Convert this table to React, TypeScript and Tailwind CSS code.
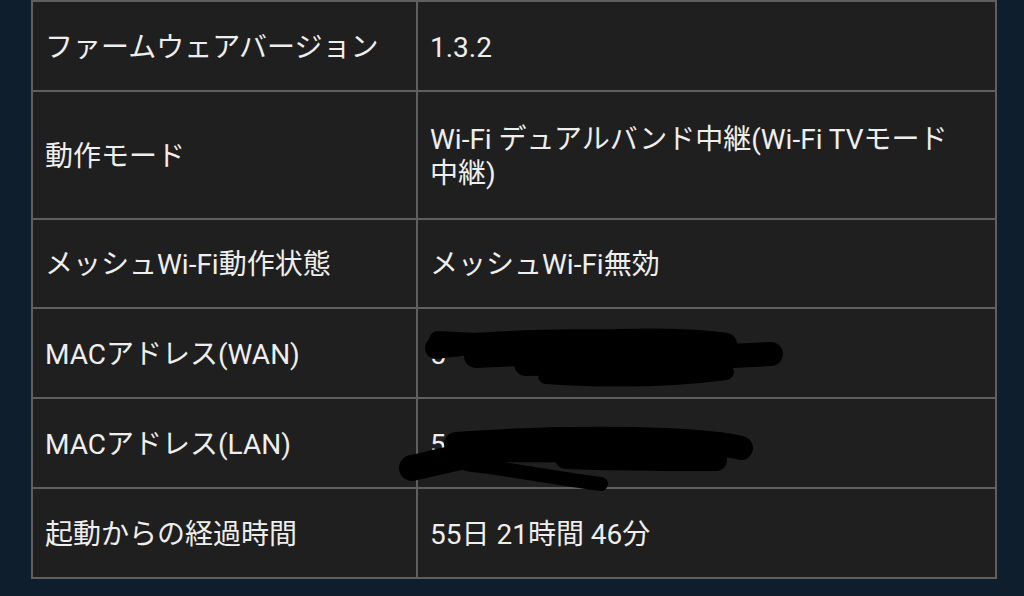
import React from "react";

type Row = { label: string; value: React.ReactNode; h: string };

const Scribble = ({ variant }: { variant: "wan" | "lan" }) => (
  <svg
    className="pointer-events-none absolute left-0 top-0 overflow-visible"
    width="400"
    height="90"
    viewBox="0 0 400 90"
    fill="none"
    stroke="#000"
    strokeLinecap="round"
  >
    {variant === "wan" ? (
      <>
        <path d="M20 36 C60 30 120 28 200 28 C260 26 300 30 310 32" strokeWidth="22" />
        <path d="M60 44 C140 40 220 38 300 40" strokeWidth="24" />
        <path d="M110 52 C200 50 280 46 355 42" strokeWidth="24" />
        <path d="M130 64 C190 68 250 68 310 60" strokeWidth="16" />
        <path d="M22 28 L60 30" strokeWidth="18" />
      </>
    ) : (
      <>
        <path d="M-4 66 C40 56 90 44 140 38" strokeWidth="26" />
        <path d="M40 42 C120 36 200 36 250 38 C290 40 310 42 325 46" strokeWidth="24" />
        <path d="M50 62 C100 68 150 78 185 82" strokeWidth="14" />
        <path d="M150 56 C200 58 250 58 300 58" strokeWidth="22" />
        <path d="M60 52 C120 50 170 52 210 52" strokeWidth="18" />
      </>
    )}
  </svg>
);

const rows: Row[] = [
  { label: "ファームウェアバージョン", value: "1.3.2", h: "h-[90px]" },
  {
    label: "動作モード",
    value: "Wi-Fi デュアルバンド中継(Wi-Fi TVモード中継)",
    h: "h-[128px]",
  },
  { label: "メッシュWi-Fi動作状態", value: "メッシュWi-Fi無効", h: "h-[89px]" },
  {
    label: "MACアドレス(WAN)",
    value: (
      <span className="relative block h-[34px]">
        <span>5</span>
        <span className="absolute -left-[14px] -top-[26px]">
          <Scribble variant="wan" />
        </span>
      </span>
    ),
    h: "h-[90px]",
  },
  {
    label: "MACアドレス(LAN)",
    value: (
      <span className="relative block h-[34px]">
        <span>5</span>
        <span className="absolute -left-[14px] -top-[26px]">
          <Scribble variant="lan" />
        </span>
      </span>
    ),
    h: "h-[90px]",
  },
  { label: "起動からの経過時間", value: "55日 21時間 46分", h: "h-[90px]" },
];

export default function App() {
  return (
    <div
      className="h-[596px] w-[1024px] overflow-hidden bg-[#0f1e2c] pl-[31px]"
      style={{ fontFamily: 'Roboto, "Noto Sans CJK JP", sans-serif' }}
    >
      <table className="w-[966px] table-fixed border-collapse bg-[#1f1f1f] text-[28px] leading-[34px] text-[#eeeeee]">
        <tbody>
          {rows.map((r) => (
            <tr key={r.label} className={r.h}>
              <td className="w-[385px] border-2 border-[#5f5f5f] px-[12px] pt-[3px] align-middle">
                {r.label}
              </td>
              <td className="border-2 border-[#5f5f5f] pl-[12px] pr-[30px] pt-[3px] align-middle">
                {r.value}
              </td>
            </tr>
          ))}
        </tbody>
      </table>
    </div>
  );
}
